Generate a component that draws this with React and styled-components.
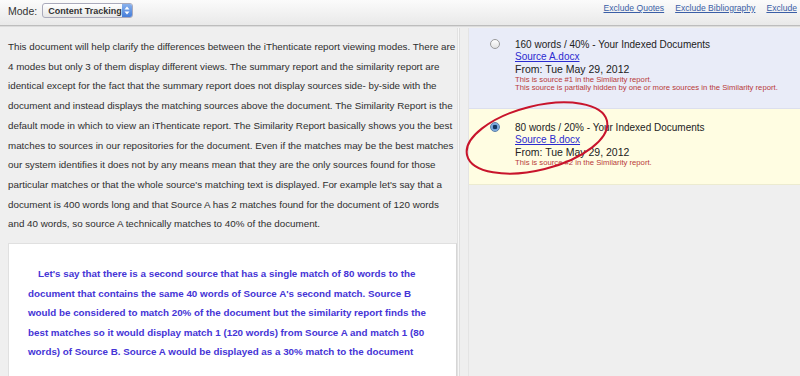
import styled, { createGlobalStyle } from "styled-components";

const GlobalStyle = createGlobalStyle`
  html, body {
    margin: 0;
    padding: 0;
    overflow: hidden;
    background: #efefef;
  }
  body {
    font-family: "Liberation Sans", Arial, sans-serif;
  }
`;

const Page = styled.div`
  width: 800px;
  height: 376px;
  display: flex;
  flex-direction: column;
  overflow: hidden;
`;

const Toolbar = styled.header`
  height: 26px;
  flex-shrink: 0;
  display: flex;
  align-items: flex-start;
  justify-content: space-between;
  padding: 3px 0 0 8px;
  box-sizing: border-box;
  background: linear-gradient(#fbfbfb, #e9e9e9);
  border-bottom: 1px solid #bdbdbd;
  box-shadow: 0 1px 0 #dcdcdc;
`;

const ModeGroup = styled.div`
  display: flex;
  align-items: center;
  gap: 5px;
  font-size: 10.5px;
  color: #333;
`;

const Select = styled.div`
  height: 15px;
  width: 91px;
  display: flex;
  align-items: center;
  justify-content: space-between;
  padding-left: 5px;
  border: 1px solid #aab;
  border-radius: 3px;
  background: linear-gradient(#ffffff, #e6e6e6);
  font-size: 9px;
  font-weight: bold;
  color: #333;
  box-sizing: border-box;
  overflow: hidden;
  white-space: nowrap;
`;

const Stepper = styled.span`
  width: 11px;
  height: 15px;
  flex-shrink: 0;
  display: flex;
  align-items: center;
  justify-content: center;
  background: linear-gradient(#8fb6ef, #3f79d8);
  border-radius: 0 3px 3px 0;
`;

const Links = styled.nav`
  display: flex;
  gap: 11px;
  margin-top: 0px;
  margin-right: 3px;
`;

const ToolLink = styled.a`
  font-size: 8.6px;
  color: #3a5ea6;
  text-decoration: underline;
  white-space: nowrap;
`;

const Main = styled.div`
  flex: 1;
  display: flex;
  min-height: 0;
  padding-top: 2px;
`;

const DocPane = styled.section`
  width: 458px;
  flex-shrink: 0;
  padding: 9px 0 0 8px;
  box-sizing: border-box;
  border-right: 1px solid #e2e2e2;
  margin-right: 10px;
  background: #efefef;
  box-shadow: 1px 0 0 #f7f7f7, 2px 0 0 #dedede;
`;

const Intro = styled.p`
  margin: 0;
  font-size: 9.8px;
  line-height: 19.7px;
  color: #2e2e2e;
  white-space: nowrap;
`;

const QuoteBox = styled.div`
  margin-top: 9px;
  background: #ffffff;
  border: 1px solid #e0e0e0;
  border-right: 1px solid #d6d6d6;
  padding: 20px 0 20px 19px;
  min-height: 140px;
`;

const Quote = styled.p`
  margin: 0;
  font-size: 9.8px;
  font-weight: bold;
  line-height: 19.6px;
  color: #4534d6;
  text-indent: 10px;
  white-space: nowrap;
`;

const SourcePane = styled.aside`
  flex: 1;
  position: relative;
  background: #efefef;
  border-left: 1px solid #e4e4e4;
`;

const SourceItem = styled.div`
  display: flex;
  align-items: flex-start;
  gap: 15px;
  padding: ${(p) => (p.$active ? 13 : 11)}px 0 0 21px;
  height: ${(p) => p.$height}px;
  box-sizing: border-box;
  background: ${(p) => (p.$active ? "#fffde2" : "#e9ecf8")};
  border-bottom: 1px solid ${(p) => (p.$active ? "#ecebd0" : "#dcdfee")};
`;

const Radio = styled.span`
  width: 10px;
  height: 10px;
  margin-top: 0px;
  border-radius: 50%;
  flex-shrink: 0;
  box-sizing: border-box;
  border: 1px solid ${(p) => (p.$checked ? "#5a7fa8" : "#9a9a9a")};
  background: ${(p) =>
    p.$checked
      ? "radial-gradient(circle, #14355f 0 2px, #6fa0da 2.5px, #a9c8ee 100%)"
      : "linear-gradient(#ffffff, #e2e2e2)"};
`;

const SourceText = styled.div`
  display: flex;
  flex-direction: column;
`;

const Title = styled.span`
  font-size: 10px;
  line-height: 12px;
  color: #222;
`;

const SourceLink = styled.a`
  font-size: 10px;
  line-height: 12px;
  color: #2b2bd0;
  text-decoration: underline;
`;

const FromLine = styled.span`
  font-size: 10.5px;
  line-height: 12.5px;
  color: #222;
`;

const Note = styled.span`
  font-size: 7.7px;
  line-height: 8.5px;
  color: #b83a3a;
  white-space: nowrap;
  &:first-of-type {
    margin-top: 3px;
  }
`;

const Annotation = styled.svg`
  position: absolute;
  left: -20px;
  top: 58px;
  pointer-events: none;
`;

function Arrows() {
  return (
    <svg width="6" height="9" viewBox="0 0 6 9">
      <path d="M3 0.5 L5.5 3.5 H0.5 Z" fill="#fff" />
      <path d="M3 8.5 L5.5 5.5 H0.5 Z" fill="#fff" />
    </svg>
  );
}

const introLines = [
  "This document will help clarify the differences between the iThenticate report viewing modes. There are",
  "4 modes but only 3 of them display different views. The summary report and the similarity report are",
  "identical except for the fact that the summary report does not display sources side- by-side with the",
  "document and instead displays the matching sources above the document. The Similarity Report is the",
  "default mode in which to view an iThenticate report. The Similarity Report basically shows you the best",
  "matches to sources in our repositories for the document. Even if the matches may be the best matches",
  "our system identifies it does not by any means mean that they are the only sources found for those",
  "particular matches or that the whole source's matching text is displayed. For example let's say that a",
  "document is 400 words long and that Source A has 2 matches found for the document of 120 words",
  "and 40 words, so source A technically matches to 40% of the document.",
];

const quoteLines = [
  "Let's say that there is a second source that has a single match of 80 words to the",
  "document that contains the same 40 words of Source A's second match. Source B",
  "would be considered to match 20% of the document but the similarity report finds the",
  "best matches so it would display match 1 (120 words) from Source A and match 1 (80",
  "words) of Source B. Source A would be displayed as a 30% match to the document",
];

const sources = [
  {
    title: "160 words / 40% - Your Indexed Documents",
    file: "Source A.docx ",
    notes: [
      "This is source #1 in the Similarity report.",
      "This source is partially hidden by one or more sources in the Similarity report.",
    ],
    height: 81,
  },
  {
    title: "80 words / 20% - Your Indexed Documents",
    file: "Source B.docx ",
    notes: ["This is source #2 in the Similarity report."],
    active: true,
    height: 76,
  },
];

export default function App() {
  return (
    <Page>
      <GlobalStyle />
      <Toolbar>
        <ModeGroup>
          Mode:
          <Select>
            Content Tracking
            <Stepper>
              <Arrows />
            </Stepper>
          </Select>
        </ModeGroup>
        <Links>
          <ToolLink href="#">Exclude Quotes</ToolLink>
          <ToolLink href="#">Exclude Bibliography</ToolLink>
          <ToolLink href="#">Exclude</ToolLink>
        </Links>
      </Toolbar>
      <Main>
        <DocPane>
          <Intro>
            {introLines.map((l, i) => (
              <span key={i}>
                {l}
                <br />
              </span>
            ))}
          </Intro>
          <QuoteBox>
            <Quote>
              {quoteLines.map((l, i) => (
                <span key={i}>
                  {l}
                  <br />
                </span>
              ))}
            </Quote>
          </QuoteBox>
        </DocPane>
        <SourcePane>
          {sources.map((s, i) => (
            <SourceItem key={i} $active={s.active} $height={s.height}>
              <Radio $checked={s.active} />
              <SourceText>
                <Title>{s.title}</Title>
                <SourceLink href="#">{s.file}</SourceLink>
                <FromLine>From: Tue May 29, 2012</FromLine>
                {s.notes.map((n, j) => (
                  <Note key={j}>{n}</Note>
                ))}
              </SourceText>
            </SourceItem>
          ))}
          <Annotation width="200" height="110" viewBox="0 0 200 110">
            <ellipse
              cx="88"
              cy="52"
              rx="72"
              ry="32"
              transform="rotate(-14 88 52)"
              fill="none"
              stroke="#c8142c"
              strokeWidth="2"
            />
          </Annotation>
        </SourcePane>
      </Main>
    </Page>
  );
}
